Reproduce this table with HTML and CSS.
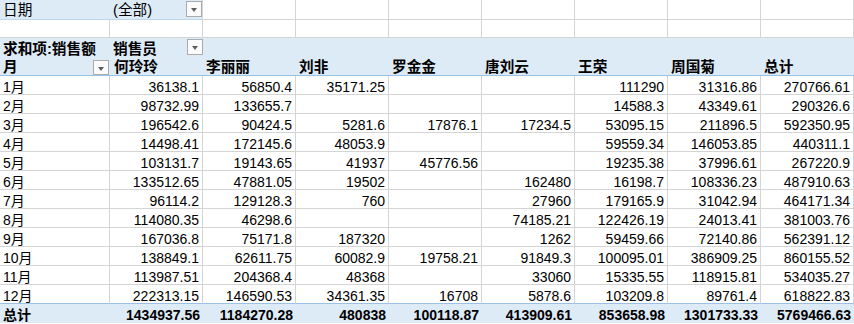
FILE: index.html
```html
<!DOCTYPE html>
<html lang="zh-CN">
<head>
<meta charset="utf-8">
<title>数据透视表</title>
<link rel="stylesheet" href="styles.css">
</head>
<body>
<div class="sheet">
  <div class="row filter">
    <div class="c hd txt">日期</div>
    <div class="c hd txt sel"><span>(全部)</span><span class="dd"></span></div>
    <div class="c"></div><div class="c"></div><div class="c"></div><div class="c"></div><div class="c"></div><div class="c"></div><div class="c"></div>
  </div>
  <div class="row blank">
    <div class="c"></div><div class="c"></div><div class="c"></div><div class="c"></div><div class="c"></div><div class="c"></div><div class="c"></div><div class="c"></div><div class="c"></div>
  </div>
  <div class="row head1">
    <div class="c txt b">求和项:销售额</div>
    <div class="c txt b sel"><span>销售员</span><span class="dd"></span></div>
    <div class="c"></div><div class="c"></div><div class="c"></div><div class="c"></div><div class="c"></div><div class="c"></div><div class="c"></div>
  </div>
  <div class="row head2">
    <div class="c txt b sel"><span>月</span><span class="dd"></span></div>
    <div class="c txt b">何玲玲</div>
    <div class="c txt b">李丽丽</div>
    <div class="c txt b">刘非</div>
    <div class="c txt b">罗金金</div>
    <div class="c txt b">唐刘云</div>
    <div class="c txt b">王荣</div>
    <div class="c txt b">周国菊</div>
    <div class="c txt b">总计</div>
  </div>
  <div class="row data">
    <div class="c lbl">1月</div><div class="c n">36138.1</div><div class="c n">56850.4</div><div class="c n">35171.25</div><div class="c n"></div><div class="c n"></div><div class="c n">111290</div><div class="c n">31316.86</div><div class="c n">270766.61</div>
  </div>
  <div class="row data">
    <div class="c lbl">2月</div><div class="c n">98732.99</div><div class="c n">133655.7</div><div class="c n"></div><div class="c n"></div><div class="c n"></div><div class="c n">14588.3</div><div class="c n">43349.61</div><div class="c n">290326.6</div>
  </div>
  <div class="row data">
    <div class="c lbl">3月</div><div class="c n">196542.6</div><div class="c n">90424.5</div><div class="c n">5281.6</div><div class="c n">17876.1</div><div class="c n">17234.5</div><div class="c n">53095.15</div><div class="c n">211896.5</div><div class="c n">592350.95</div>
  </div>
  <div class="row data">
    <div class="c lbl">4月</div><div class="c n">14498.41</div><div class="c n">172145.6</div><div class="c n">48053.9</div><div class="c n"></div><div class="c n"></div><div class="c n">59559.34</div><div class="c n">146053.85</div><div class="c n">440311.1</div>
  </div>
  <div class="row data">
    <div class="c lbl">5月</div><div class="c n">103131.7</div><div class="c n">19143.65</div><div class="c n">41937</div><div class="c n">45776.56</div><div class="c n"></div><div class="c n">19235.38</div><div class="c n">37996.61</div><div class="c n">267220.9</div>
  </div>
  <div class="row data">
    <div class="c lbl">6月</div><div class="c n">133512.65</div><div class="c n">47881.05</div><div class="c n">19502</div><div class="c n"></div><div class="c n">162480</div><div class="c n">16198.7</div><div class="c n">108336.23</div><div class="c n">487910.63</div>
  </div>
  <div class="row data">
    <div class="c lbl">7月</div><div class="c n">96114.2</div><div class="c n">129128.3</div><div class="c n">760</div><div class="c n"></div><div class="c n">27960</div><div class="c n">179165.9</div><div class="c n">31042.94</div><div class="c n">464171.34</div>
  </div>
  <div class="row data">
    <div class="c lbl">8月</div><div class="c n">114080.35</div><div class="c n">46298.6</div><div class="c n"></div><div class="c n"></div><div class="c n">74185.21</div><div class="c n">122426.19</div><div class="c n">24013.41</div><div class="c n">381003.76</div>
  </div>
  <div class="row data">
    <div class="c lbl">9月</div><div class="c n">167036.8</div><div class="c n">75171.8</div><div class="c n">187320</div><div class="c n"></div><div class="c n">1262</div><div class="c n">59459.66</div><div class="c n">72140.86</div><div class="c n">562391.12</div>
  </div>
  <div class="row data">
    <div class="c lbl">10月</div><div class="c n">138849.1</div><div class="c n">62611.75</div><div class="c n">60082.9</div><div class="c n">19758.21</div><div class="c n">91849.3</div><div class="c n">100095.01</div><div class="c n">386909.25</div><div class="c n">860155.52</div>
  </div>
  <div class="row data">
    <div class="c lbl">11月</div><div class="c n">113987.51</div><div class="c n">204368.4</div><div class="c n">48368</div><div class="c n"></div><div class="c n">33060</div><div class="c n">15335.55</div><div class="c n">118915.81</div><div class="c n">534035.27</div>
  </div>
  <div class="row data last">
    <div class="c lbl">12月</div><div class="c n">222313.15</div><div class="c n">146590.53</div><div class="c n">34361.35</div><div class="c n">16708</div><div class="c n">5878.6</div><div class="c n">103209.8</div><div class="c n">89761.4</div><div class="c n">618822.83</div>
  </div>
  <div class="row total">
    <div class="c lbl">总计</div><div class="c n">1434937.56</div><div class="c n">1184270.28</div><div class="c n">480838</div><div class="c n">100118.87</div><div class="c n">413909.61</div><div class="c n">853658.98</div><div class="c n">1301733.33</div><div class="c n">5769466.63</div>
  </div>
</div>
</body>
</html>
```

FILE: styles.css
```css
html, body {
  margin: 0;
  padding: 0;
  background: #ffffff;
}

.sheet {
  display: grid;
  grid-template-columns: 110px repeat(8, 93px);
  grid-auto-rows: 19px;
  font-family: "Liberation Sans", "Noto Sans CJK SC", sans-serif;
  font-size: 14px;
  color: #000;
}

.row {
  display: contents;
}

.c {
  box-sizing: border-box;
  height: 19px;
  border-right: 1px solid #d4d4d4;
  border-bottom: 1px solid #d4d4d4;
  padding: 2px 3px 0 3px;
  line-height: 18px;
  white-space: nowrap;
}

.txt {
  font-size: 14.67px;
  line-height: 16px;
}

.b {
  font-weight: bold;
}

.lbl {
  text-align: left;
}

.n {
  text-align: right;
}

/* filter row */
.filter .c {
  height: 20px;
}
.filter .hd {
  background: #ddebf7;
  border-bottom-color: #bdd7ee;
  padding-top: 2px;
}
.filter .hd:first-child {
  border-right: none;
}

/* pivot header */
.head1 .c,
.head2 .c {
  background: #ddebf7;
  border-right: none;
}
.head1 .c {
  border-bottom: none;
  padding-top: 3px;
}
.head2 .c {
  border-bottom: 1px solid #9bc2e6;
  padding-top: 2px;
}
.head2 .c:nth-child(2) {
  padding-left: 4px;
}

.sel {
  display: flex;
  align-items: flex-start;
  justify-content: space-between;
  padding-right: 0;
}

.dd {
  box-sizing: border-box;
  width: 16px;
  height: 16px;
  border: 1px solid #ababab;
  background: #fbfbfb;
  position: relative;
  flex: none;
}
.dd::after {
  content: "";
  position: absolute;
  left: 4px;
  top: 6px;
  border-left: 3px solid transparent;
  border-right: 3px solid transparent;
  border-top: 4px solid #5e5e5e;
}

.filter .sel .dd {
  margin-top: -1px;
}
.head1 .sel .dd {
  margin-top: -2px;
}
.head2 .sel .dd {
  margin-top: 1px;
  margin-right: 1px;
  height: 15px;
}

.row.last .c {
  border-bottom-color: #9bc2e6;
}

.total .c {
  background: #ddebf7;
  border-right: none;
  border-bottom: 1px solid #ddebf7;
  font-weight: bold;
}
```
